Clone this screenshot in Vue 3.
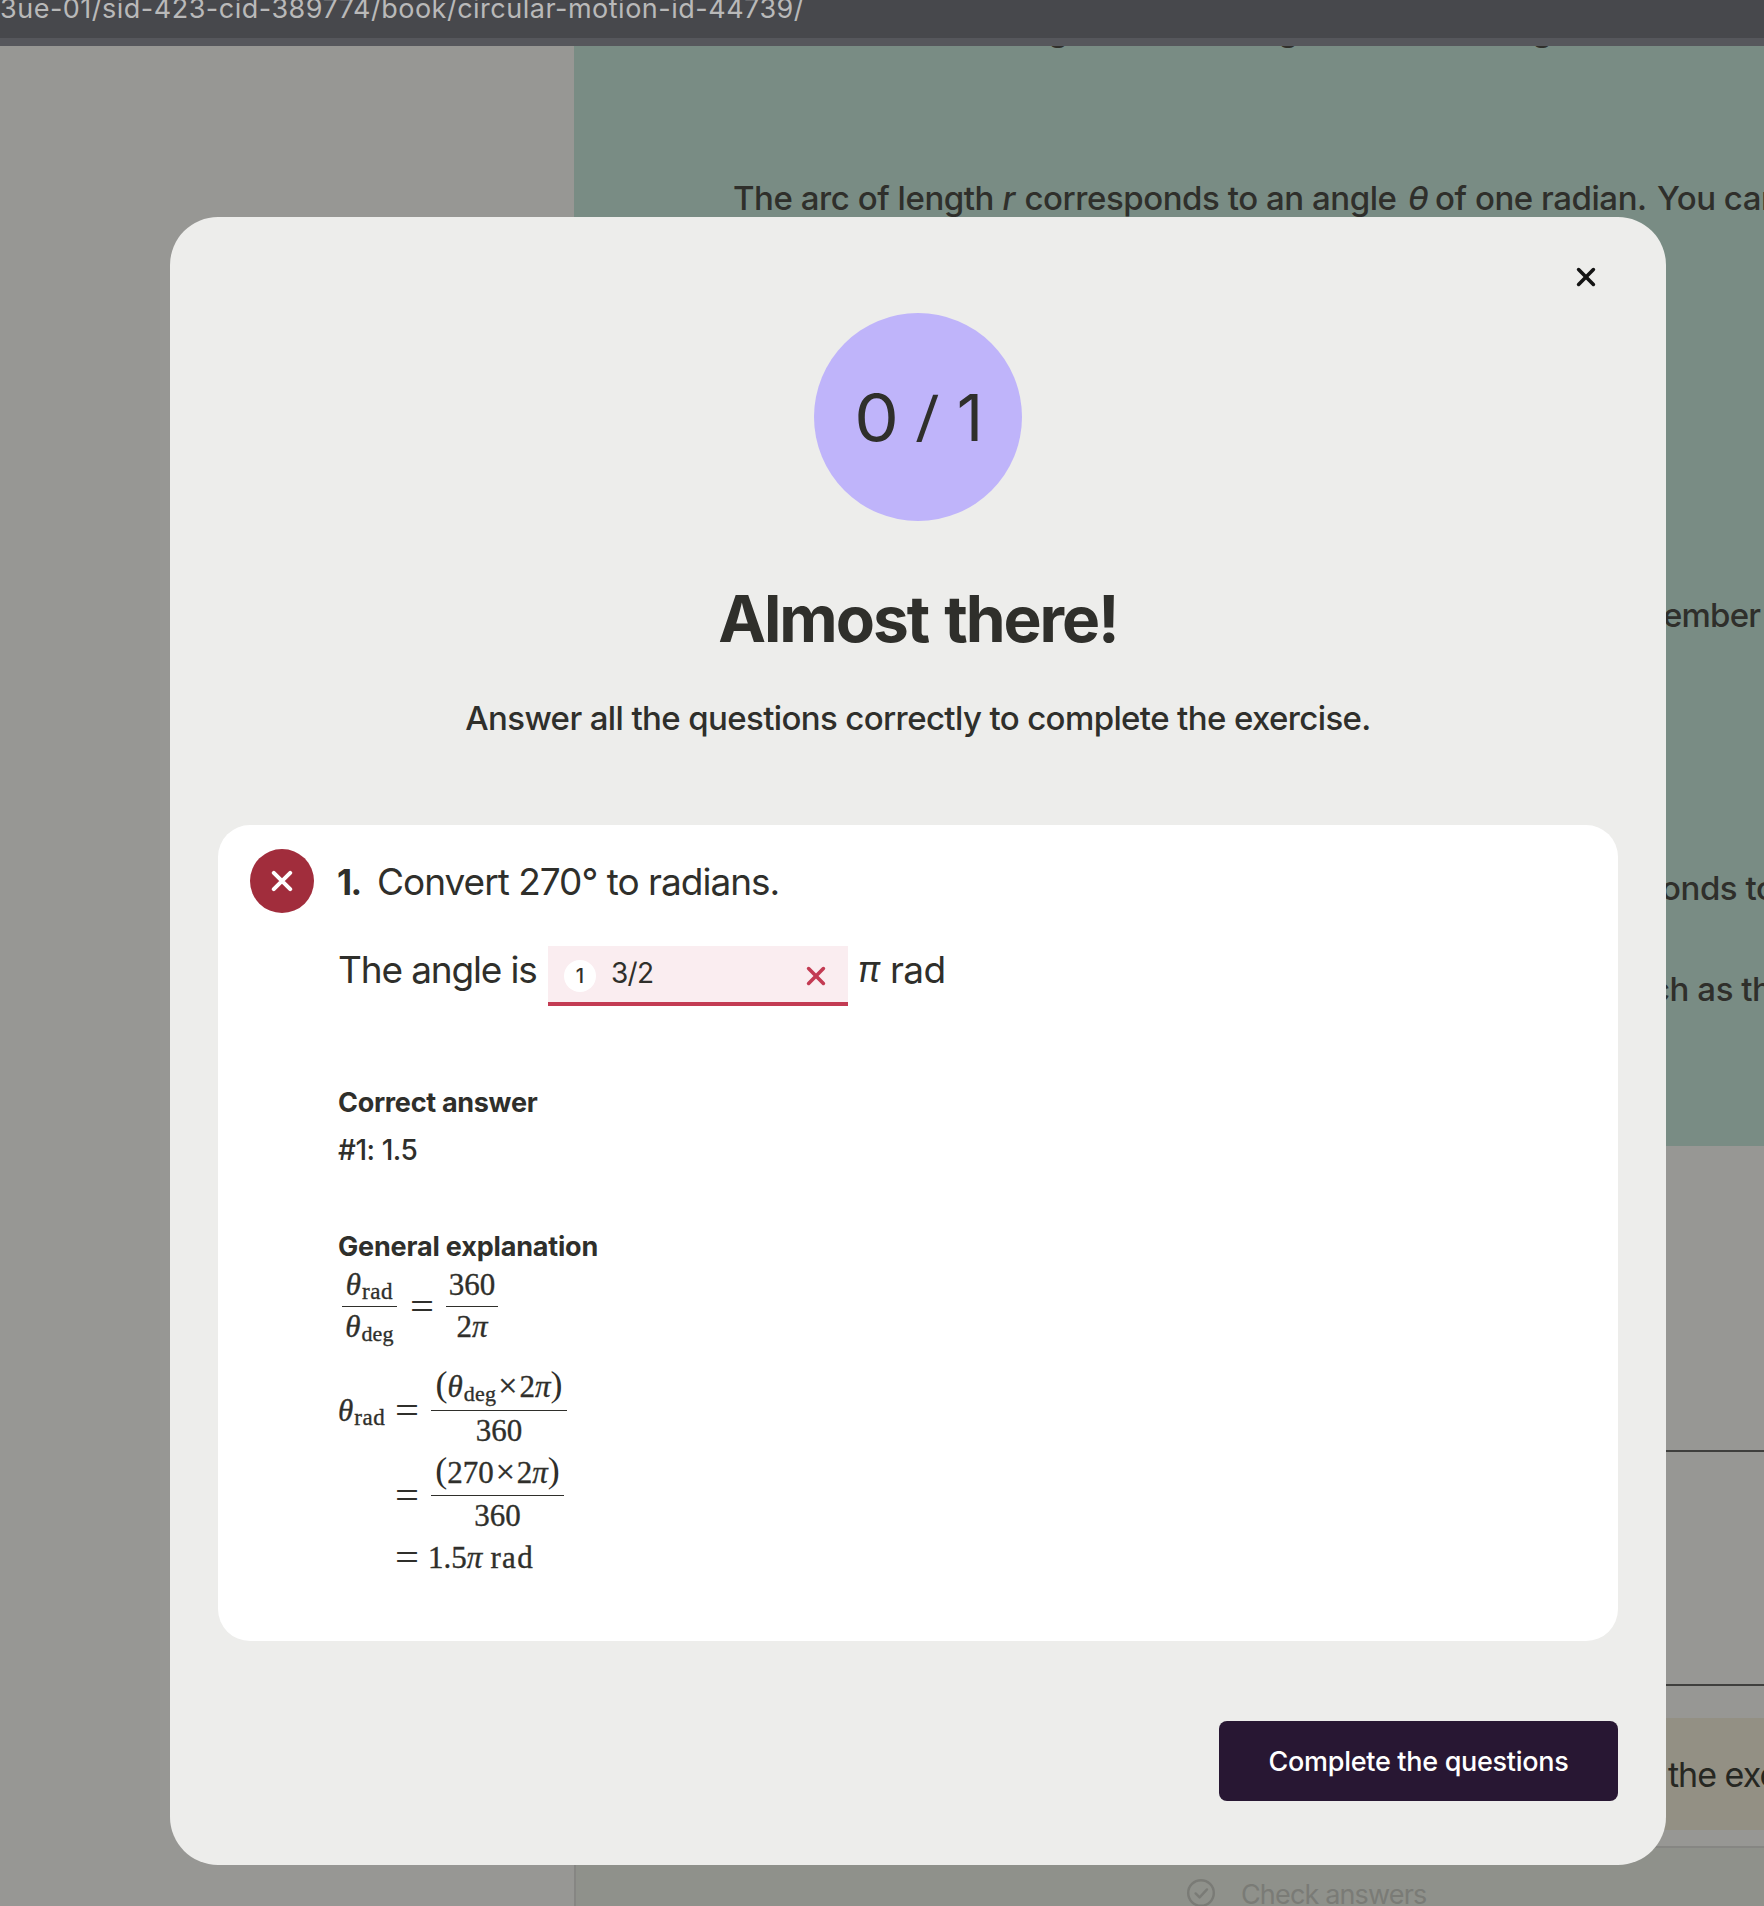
<script setup>
const score = { correct: 0, total: 1 }
const response = '3/2'
</script>

<template>
  <div class="screen">
    <header class="browser-bar">
      <span class="url">3ue-01/sid-423-cid-389774/book/circular-motion-id-44739/</span>
    </header>

    <div class="page">
      <aside class="gutter"></aside>
      <main class="book">
        <section class="theory">
          <p class="line cut"><span>g</span><span>g</span><span>g</span></p>
          <p class="line arc">
            <span class="w1">The arc of length</span>
            <span class="w2"><i>r</i></span>
            <span class="w3">corresponds to an angle</span>
            <span class="w4"><i>θ</i></span>
            <span class="w5">of one radian.</span>
            <span class="w6">You can</span>
          </p>
          <p class="line side s1">ember</p>
          <p class="line side s2">onds to</p>
          <p class="line side s3">ch as the</p>
        </section>
        <section class="exercise">
          <div class="blank b1"></div>
          <div class="blank b2"></div>
          <div class="notice">the exercise</div>
        </section>
        <footer class="check">
          <svg class="check-icon" viewBox="0 0 28 28" width="28" height="28">
            <circle cx="14" cy="14" r="12.8" />
            <path d="M8.6 14.4l4 4 7.4-8" />
          </svg>
          <span>Check answers</span>
        </footer>
      </main>
    </div>

    <div class="modal">
      <button class="close" aria-label="Close">
        <svg viewBox="0 0 20 20" width="20" height="20"><path d="M2.6 2.6l14.8 14.8M17.4 2.6L2.6 17.4" /></svg>
      </button>
      <div class="score">
        <span class="got">{{ score.correct }}</span><span class="slash">/</span><span>{{ score.total }}</span>
      </div>
      <h1>Almost there!</h1>
      <p class="sub">Answer all the questions correctly to complete the exercise.</p>

      <article class="card">
        <div class="badge">
          <svg viewBox="0 0 22 22" width="22" height="22"><path d="M2.8 2.8l16.4 16.4M19.2 2.8L2.8 19.2" /></svg>
        </div>
        <div class="content">
          <div class="question"><b>1.</b><span>Convert 270° to radians.</span></div>
          <div class="answer">
            <span class="lead">The angle is</span>
            <div class="field">
              <span class="num">1</span>
              <span class="value">{{ response }}</span>
              <svg viewBox="0 0 20 20" width="20" height="20"><path d="M2.6 2.6l14.8 14.8M17.4 2.6L2.6 17.4" /></svg>
            </div>
            <i class="pi">π</i><span class="rad">rad</span>
          </div>

          <h2 class="first">Correct answer</h2>
          <p class="correct">#1: 1.5</p>
          <h2 class="second">General explanation</h2>

          <div class="math eq1">
            <div class="frac f1">
              <div class="top"><i>θ</i><sub>rad</sub></div>
              <div class="bottom"><i>θ</i><sub class="deg">deg</sub></div>
            </div>
            <span class="eq">=</span>
            <div class="frac f2">
              <div class="top">360</div>
              <div class="bottom">2<i>π</i></div>
            </div>
          </div>
          <div class="math eq2">
            <span class="lhs"><i>θ</i><sub>rad</sub></span>
            <span class="eq">=</span>
            <div class="frac f3">
              <div class="top"><span class="par">(</span><i>θ</i><sub class="deg">deg</sub><span class="times">×</span>2<i>π</i><span class="par">)</span></div>
              <div class="bottom">360</div>
            </div>
          </div>
          <div class="math eq3">
            <span class="lhs"></span>
            <span class="eq">=</span>
            <div class="frac f4">
              <div class="top"><span class="par">(</span>270<span class="times">×</span>2<i>π</i><span class="par">)</span></div>
              <div class="bottom">360</div>
            </div>
          </div>
          <div class="math eq4">
            <span class="lhs"></span>
            <span class="eq">=</span>
            <span class="result">1.5<i>π</i></span><span class="unit">rad</span>
          </div>
        </div>
      </article>

      <button class="complete">Complete the questions</button>
    </div>
  </div>
</template>

<style>
body { margin: 0; }
</style>

<style scoped>
* { box-sizing: border-box; }
.screen {
  position: relative;
  width: 1764px;
  height: 1906px;
  overflow: hidden;
  background: #979794;
  color: #2f2f2b;
  font-family: Inter, "Liberation Sans", sans-serif;
  white-space: nowrap;
}
p, h1, h2 { margin: 0; }
svg { display: block; flex: none; fill: none; stroke-linecap: round; stroke-linejoin: round; }

.browser-bar {
  height: 46px;
  background: #47484c;
  border-bottom: 8px solid #56575c;
  overflow: hidden;
}
.url {
  display: block;
  margin-top: -11px;
  line-height: 40px;
  font-size: 27px;
  letter-spacing: 0.5px;
  color: #b9b9b9;
}

.page { display: flex; height: 1860px; }
.gutter { width: 574px; flex: none; }
.book { width: 1190px; flex: none; display: flex; flex-direction: column; }
.theory { height: 1100px; background: #798c84; overflow: hidden; }
.line { display: flex; height: 48px; line-height: 48px; font-size: 33px; font-weight: 500; letter-spacing: -0.45px; }
.line span { flex: none; }
.cut { margin-top: -41px; padding-left: 474px; }
.cut span:nth-child(1) { width: 230px; }
.cut span:nth-child(2) { width: 254px; }
.arc { margin-top: 121px; padding-left: 159px; }
.w1 { width: 269.5px; }
.w2 { width: 22px; }
.w3 { width: 383.5px; }
.w4 { width: 27px; }
.w5 { width: 222px; }
.side { padding-left: 1089px; }
.s1 { margin-top: 368.5px; letter-spacing: -0.8px; }
.s2 { margin-top: 225px; padding-left: 1087px; }
.s3 { margin-top: 53.5px; padding-left: 1077px; }

.exercise { height: 700px; }
.blank { border-bottom: 2px solid #3f3f3d; }
.b1 { height: 306px; }
.b2 { height: 234px; }
.notice {
  height: 112px;
  margin-top: 32px;
  padding-left: 1094px;
  background: #939084;
  color: #262722;
  font-size: 34px;
  line-height: 114px;
  letter-spacing: -1px;
  overflow: hidden;
}
.check {
  height: 60px;
  border-top: 2px solid #868683;
  border-left: 2px solid #868683;
  background: #8f918b;
  display: flex;
  padding: 26px 0 0 611px;
  font-size: 27px;
  line-height: 41px;
  letter-spacing: -0.85px;
  color: #7a7b76;
}
.check-icon { margin: 5px 26px 0 0; stroke: #7a7b76; stroke-width: 2.4; }

.modal {
  position: absolute;
  left: 170px;
  top: 217px;
  width: 1496px;
  height: 1648px;
  border-radius: 48px;
  background: #ededeb;
  padding: 96px 48px 64px;
  display: flex;
  flex-direction: column;
  align-items: center;
}
button { font-family: inherit; border: 0; padding: 0; margin: 0; }
.close { position: absolute; top: 50px; right: 70px; background: none; }
.close svg { stroke: #141414; stroke-width: 3.6; }
.score {
  width: 208px;
  height: 208px;
  flex: none;
  border-radius: 50%;
  background: #bfb4fa;
  display: flex;
  justify-content: center;
  font-size: 65px;
  line-height: 209px;
}
.got { transform: scaleX(1.09); margin-left: 3px; }
.slash {
  width: 45px;
  margin: 0 7px 0 8px;
  font-size: 54px;
  font-weight: 500;
  line-height: 207px;
  text-align: center;
  transform: skewX(-5deg);
}
h1 { margin-top: 59px; height: 78px; line-height: 78px; font-size: 64px; font-weight: 700; letter-spacing: -2.05px; word-spacing: 3px; }
.sub { margin-top: 36px; height: 48px; line-height: 48px; font-size: 33px; font-weight: 500; letter-spacing: -0.62px; }

.card {
  width: 1400px;
  height: 816px;
  flex: none;
  margin-top: 83px;
  border-radius: 32px;
  background: #fff;
  display: flex;
  padding: 24px 32px;
}
.badge {
  width: 64px;
  height: 64px;
  border-radius: 50%;
  background: #a12d3c;
  display: flex;
  align-items: center;
  justify-content: center;
}
.badge svg { stroke: #fff; stroke-width: 4; }
.content { margin-left: 24px; padding-top: 8px; }
.question { display: flex; height: 48px; line-height: 50px; font-size: 37px; letter-spacing: -1px; }
.question b { width: 40px; letter-spacing: -1.5px; margin-left: -1px; font-size: 35px; }
.answer { display: flex; height: 60px; margin-top: 41px; line-height: 47px; font-size: 37px; }
.lead { width: 210px; letter-spacing: -1.15px; }
.field {
  width: 300px;
  height: 60px;
  background: #faedf0;
  border-bottom: 4px solid #c33b53;
  display: flex;
  padding-left: 16px;
}
.num {
  width: 32px;
  height: 32px;
  margin-top: 14px;
  border-radius: 50%;
  background: #fff;
  font-size: 20px;
  font-weight: 500;
  line-height: 32px;
  text-align: center;
}
.value { margin-left: 15px; width: 195px; font-size: 28px; line-height: 54px; letter-spacing: -0.7px; }
.field svg { margin-top: 20px; stroke: #c33b53; stroke-width: 3.6; }
.pi { margin-left: 10px; width: 32px; font-size: 36px; }
.rad { letter-spacing: -0.6px; }

h2 { height: 40px; line-height: 40px; font-size: 27px; font-weight: 700; letter-spacing: -0.3px; }
.first { margin-top: 77px; }
.correct { height: 40px; margin-top: 7px; line-height: 40px; font-size: 28px; font-weight: 500; letter-spacing: -0.45px; }
.second { margin-top: 57px; letter-spacing: -0.18px; }

.math {
  display: flex;
  font-family: "Liberation Serif", serif;
  font-size: 31px;
  line-height: 36px;
  -webkit-text-stroke: 0.35px currentColor;
}
.math sub { font-size: 23px; line-height: 0; vertical-align: -4px; letter-spacing: 0.6px; margin-left: 1px; }
.math sub.deg { font-size: 22px; letter-spacing: 0.2px; }
.frac { text-align: center; }
.top { height: 40px; border-bottom: 1.5px solid #2f2f2b; }
.bottom { height: 36px; margin-top: 2px; }
.eq {
  width: 21px;
  font-size: 37px;
  line-height: 80px;
  -webkit-text-stroke: 0;
  transform: scaleX(1.15);
  transform-origin: left;
}
.eq1 { height: 79px; padding-left: 4px; }
.eq1 .eq { margin: 0 15px 0 13px; }
.f1 { width: 55px; }
.f2 { width: 52px; }
.lhs { width: 47px; line-height: 79px; }
.eq2 { height: 80px; margin-top: 23px; }
.eq2 .top { height: 42px; }
.eq3 .top { height: 41px; }
.eq2 .eq, .eq3 .eq, .eq4 .eq { margin: 0 15px 0 10px; }
.eq2 .eq, .eq2 .lhs { line-height: 83px; }
.eq3 .eq { line-height: 82px; }
.f3 { width: 136px; }
.f4 { width: 133px; }
.times { font-size: 34px; line-height: 0; margin: 0 2px; }
.par { font-size: 36px; line-height: 0; vertical-align: 1px; -webkit-text-stroke: 0; }
.eq3 { height: 80px; margin-top: 6px; }
.eq4 { height: 36px; margin-top: 5px; }
.eq4 .eq { line-height: 36px; margin-right: 12px; }
.result { width: 62.5px; }
.unit { letter-spacing: 1.3px; }

.complete {
  align-self: flex-end;
  width: 399px;
  height: 80px;
  flex: none;
  margin-top: 80px;
  border-radius: 8px;
  background: #281733;
  color: #fff;
  font-size: 27px;
  font-weight: 500;
  line-height: 82px;
  letter-spacing: -0.3px;
}
</style>
